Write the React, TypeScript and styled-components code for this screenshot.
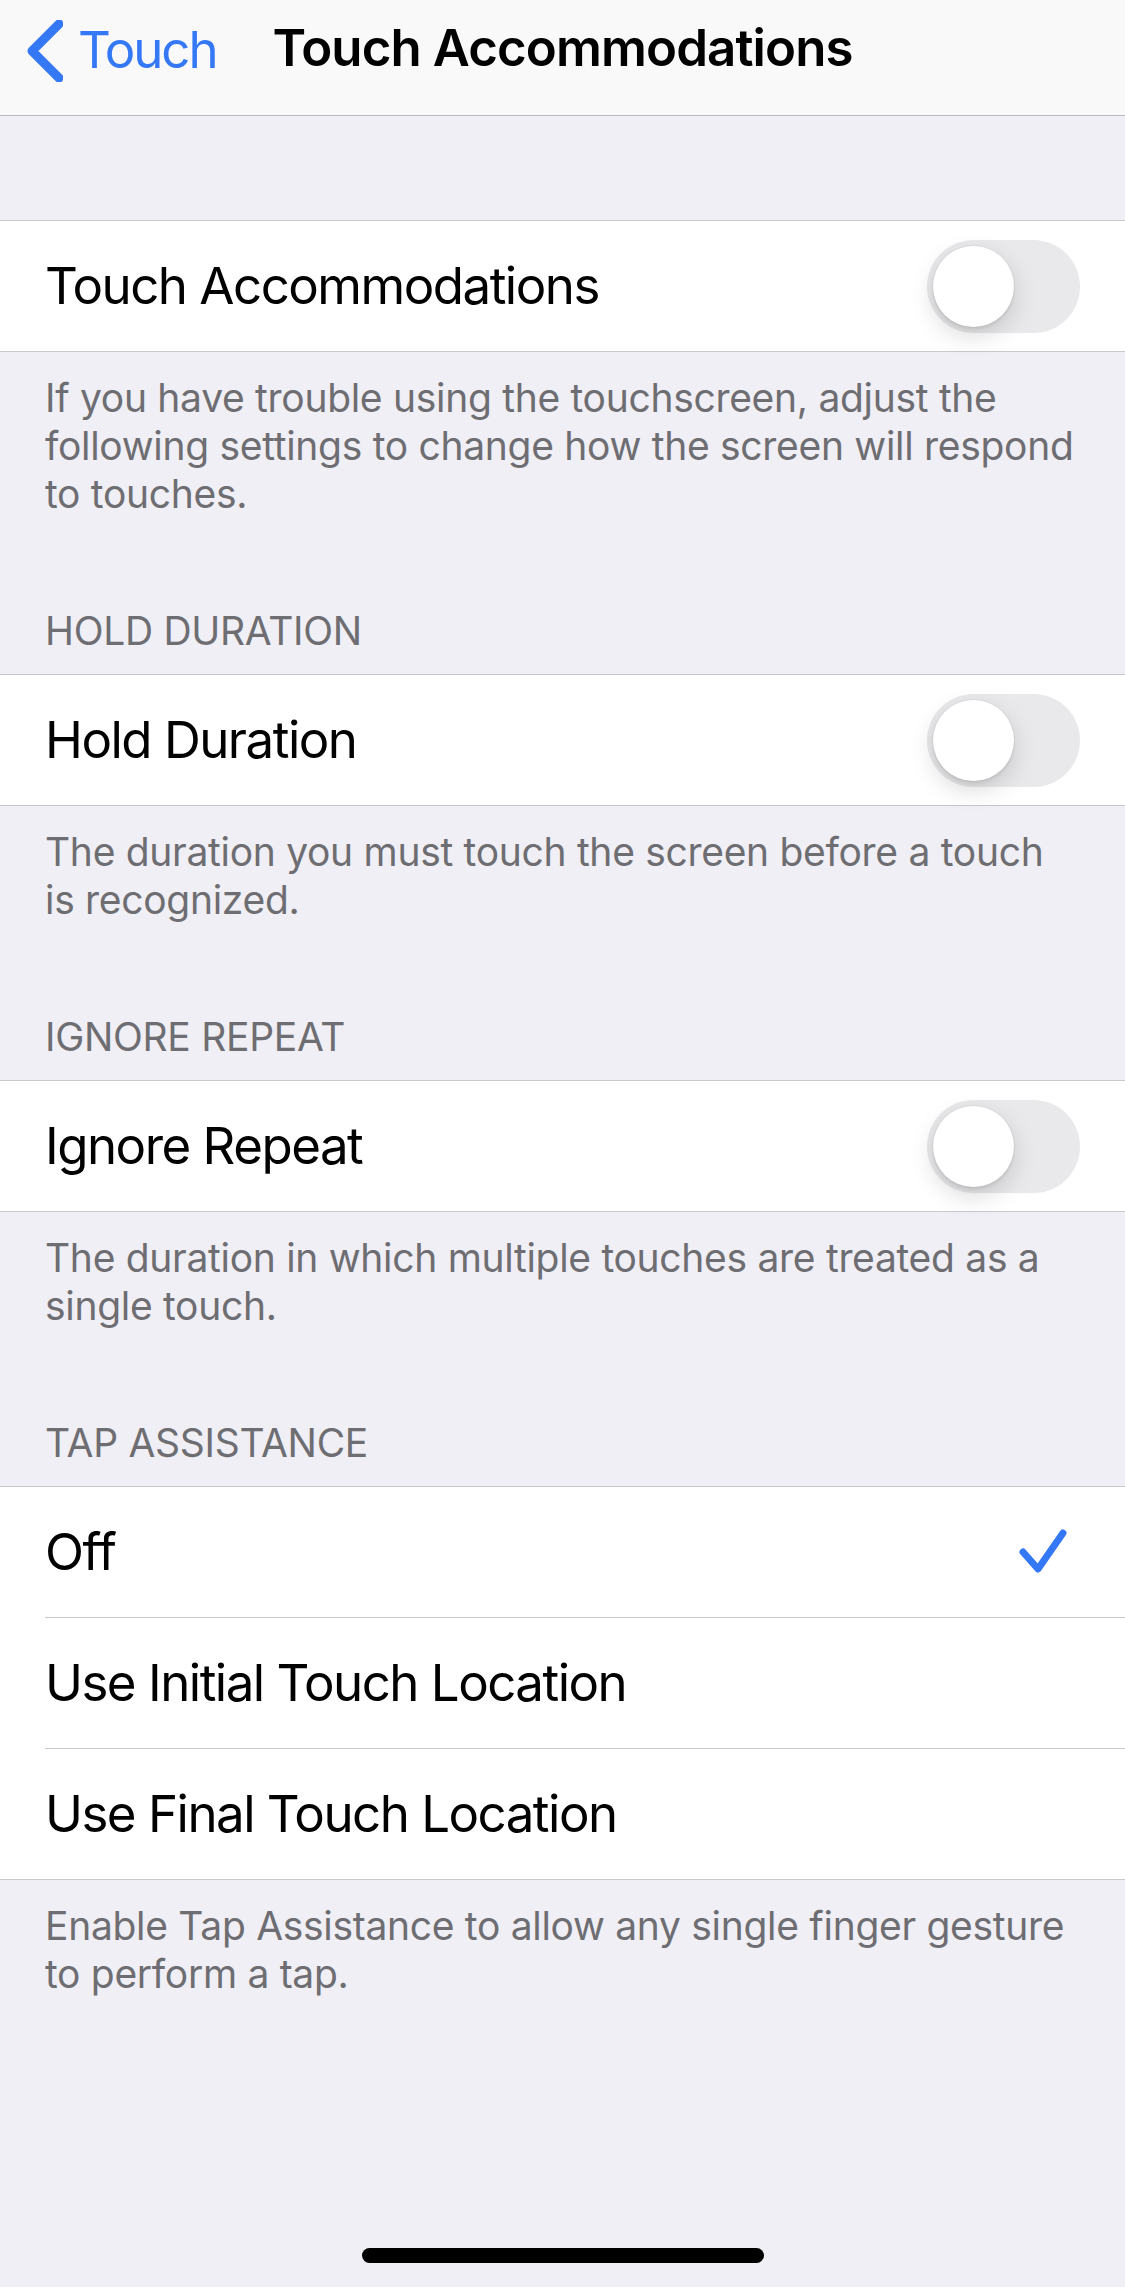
import React from "react";
import styled, { createGlobalStyle } from "styled-components";

const GlobalStyle = createGlobalStyle`
  html, body {
    margin: 0;
    padding: 0;
    background: #f0eff5;
  }
  body {
    font-family: Inter, "Noto Sans", "Liberation Sans", sans-serif;
    -webkit-font-smoothing: antialiased;
  }
  * { box-sizing: border-box; }
`;

const BLUE = "#3478f6";
const SEP = "#c8c7cc";

const Page = styled.div`
  display: flex;
  flex-direction: column;
  width: 1125px;
  height: 2287px;
  background: #f0eff5;
  overflow: hidden;
`;

const NavBar = styled.header`
  display: grid;
  grid-template-columns: 1fr auto 1fr;
  align-items: start;
  height: 116px;
  padding-top: 18px;
  background: #f9f9fa;
  border-bottom: 1px solid #b9b9bd;
`;

const BackButton = styled.button`
  display: flex;
  align-items: center;
  gap: 15px;
  justify-self: start;
  margin-left: 27px;
  padding: 0;
  border: none;
  background: none;
  color: ${BLUE};
  font-family: Inter, "Noto Sans", sans-serif;
  font-size: 51px;
  line-height: 60px;
  letter-spacing: -2.1px;
  cursor: pointer;
`;

const Chevron = styled.svg`
  width: 36px;
  height: 62px;
  margin-top: 2px;
`;

const Title = styled.h1`
  margin: 0;
  font-size: 51px;
  line-height: 60px;
  font-weight: 600;
  letter-spacing: -0.9px;
  color: #000;
`;

const TopSpacer = styled.div`
  height: 104px;
`;

const Header = styled.div`
  margin-top: 89px;
  padding: 0 45px 19px;
  font-size: 39px;
  line-height: 48px;
  color: #6d6d72;
  letter-spacing: -0.3px;
  text-transform: uppercase;
`;

const Group = styled.div`
  background: #fff;
  border-top: 1px solid ${SEP};
  border-bottom: 1px solid ${SEP};
`;

const Row = styled.div<{ $divider?: boolean }>`
  display: flex;
  align-items: center;
  justify-content: space-between;
  height: ${(p) => (p.$divider ? 131 : 130)}px;
  margin-left: 45px;
  padding-right: 45px;
  border-top: ${(p) => (p.$divider ? `1px solid ${SEP}` : "none")};
`;

const Label = styled.span`
  font-size: 51px;
  line-height: 60px;
  letter-spacing: -1.5px;
  color: #000;
`;

const Footer = styled.p`
  margin: 0;
  padding: 22px 45px 0;
  font-size: 39px;
  line-height: 48px;
  letter-spacing: -0.3px;
  color: #6d6d72;
`;

const Track = styled.div<{ $on?: boolean }>`
  position: relative;
  width: 153px;
  height: 93px;
  border-radius: 47px;
  background: ${(p) => (p.$on ? "#34c759" : "#e9e9eb")};
  flex-shrink: 0;
`;

const Knob = styled.div`
  position: absolute;
  top: 6px;
  left: 6px;
  width: 81px;
  height: 81px;
  border-radius: 50%;
  background: #fff;
  box-shadow: 0 9px 24px rgba(0, 0, 0, 0.15), 0 3px 3px rgba(0, 0, 0, 0.06),
    0 0 0 1px rgba(0, 0, 0, 0.04);
`;

const Check = styled.svg`
  width: 48px;
  height: 46px;
  margin-right: 13px;
`;

const BottomArea = styled.div`
  margin-top: auto;
  display: flex;
  justify-content: center;
  padding-bottom: 24px;
`;

const HomeIndicator = styled.div`
  width: 402px;
  height: 15px;
  border-radius: 8px;
  background: #000;
`;

const Switch = () => (
  <Track>
    <Knob />
  </Track>
);

const CheckMark = () => (
  <Check viewBox="0 0 48 46">
    <path
      d="M4 23 L19 40 L44 4"
      fill="none"
      stroke={BLUE}
      strokeWidth="7"
      strokeLinecap="round"
      strokeLinejoin="round"
    />
  </Check>
);

const ToggleSection = ({
  header,
  label,
  footer,
}: {
  header?: string;
  label: string;
  footer: string;
}) => (
  <section>
    {header && <Header>{header}</Header>}
    <Group>
      <Row>
        <Label>{label}</Label>
        <Switch />
      </Row>
    </Group>
    <Footer>{footer}</Footer>
  </section>
);

const tapOptions = [
  "Off",
  "Use Initial Touch Location",
  "Use Final Touch Location",
];

export default function App() {
  return (
    <Page>
      <GlobalStyle />
      <NavBar>
        <BackButton>
          <Chevron viewBox="0 0 36 62">
            <path
              d="M32 4 L5 31 L32 58"
              fill="none"
              stroke={BLUE}
              strokeWidth="9"
              strokeLinecap="round"
              strokeLinejoin="round"
            />
          </Chevron>
          Touch
        </BackButton>
        <Title>Touch Accommodations</Title>
        <div />
      </NavBar>
      <TopSpacer />
      <ToggleSection
        label="Touch Accommodations"
        footer="If you have trouble using the touchscreen, adjust the following settings to change how the screen will respond to touches."
      />
      <ToggleSection
        header="Hold Duration"
        label="Hold Duration"
        footer="The duration you must touch the screen before a touch is recognized."
      />
      <ToggleSection
        header="Ignore Repeat"
        label="Ignore Repeat"
        footer="The duration in which multiple touches are treated as a single touch."
      />
      <section>
        <Header>Tap Assistance</Header>
        <Group>
          {tapOptions.map((opt, i) => (
            <Row key={opt} $divider={i > 0}>
              <Label>{opt}</Label>
              {i === 0 && <CheckMark />}
            </Row>
          ))}
        </Group>
        <Footer>
          Enable Tap Assistance to allow any single finger gesture to perform a
          tap.
        </Footer>
      </section>
      <BottomArea>
        <HomeIndicator />
      </BottomArea>
    </Page>
  );
}
